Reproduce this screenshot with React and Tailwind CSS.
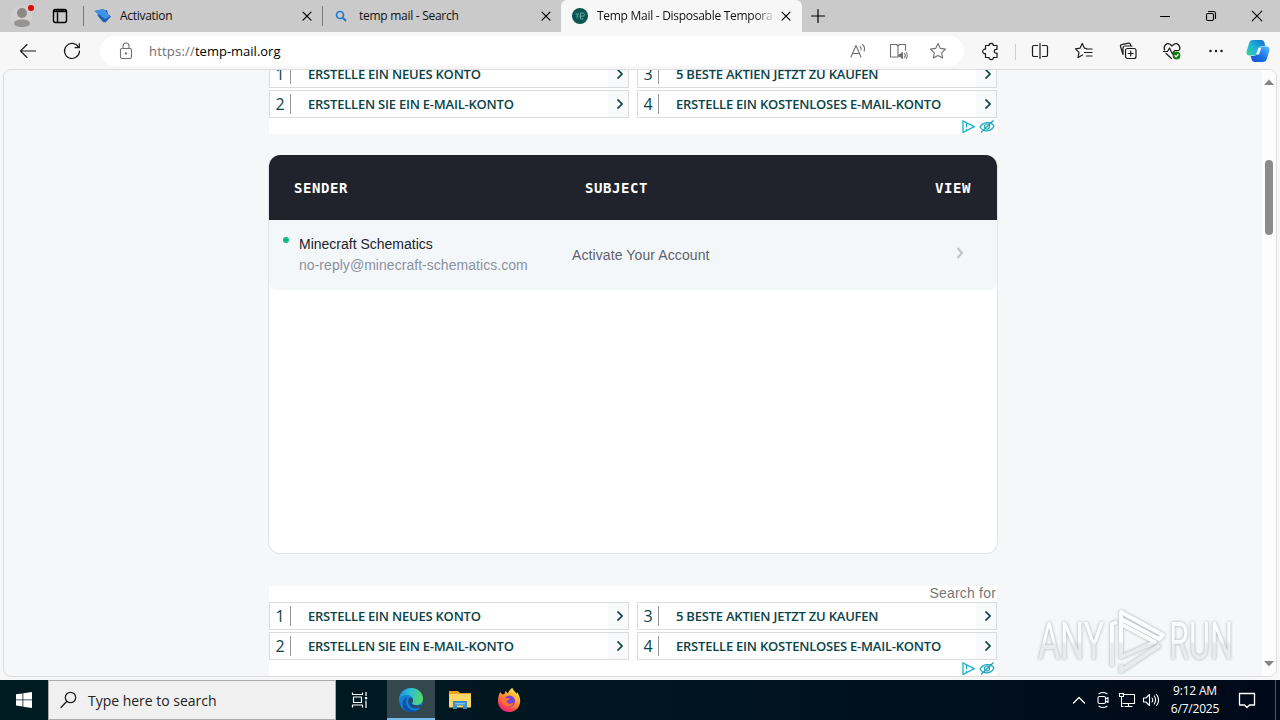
import React from "react";
import clsx from "clsx";

const ads = [
  [
    { id: 1, label: "ERSTELLE EIN NEUES KONTO" },
    { id: 2, label: "ERSTELLEN SIE EIN E-MAIL-KONTO" },
  ],
  [
    { id: 3, label: "5 BESTE AKTIEN JETZT ZU KAUFEN" },
    { id: 4, label: "ERSTELLE EIN KOSTENLOSES E-MAIL-KONTO" },
  ],
];

// Thin line icon on a 20px grid
const Icon = ({ children, className, size = 20, width = 1.1 }) => (
  <svg
    width={size}
    height={size}
    viewBox="0 0 20 20"
    fill="none"
    stroke="currentColor"
    strokeWidth={width}
    strokeLinecap="round"
    strokeLinejoin="round"
    className={clsx("shrink-0", className)}
  >
    {children}
  </svg>
);

const CloseIcon = () => (
  <Icon width={1.2}>
    <path d="M6 6.200l8 8M14 6.200l-8 8" />
  </Icon>
);

const Tab = ({ icon, title, titleClass, active }) => (
  <div
    className={clsx(
      "flex h-8 items-center",
      active
        ? "w-[241px] rounded-t-md bg-[#f7f7f7] pl-2.5 pr-1.5"
        : "w-[239px] pl-2.5 pr-1.5",
    )}
  >
    {icon}
    <div
      className={clsx(
        "ml-2 mr-1 h-5 flex-1 overflow-hidden whitespace-nowrap text-xs leading-5 text-[#111]",
        active &&
          "[mask-image:linear-gradient(to_right,black_90%,rgba(0,0,0,0.2)_100%)]",
      )}
    >
      <span className={titleClass}>{title}</span>
    </div>
    <CloseIcon />
  </div>
);

const TabStrip = () => (
  <div className="flex h-8 bg-[#cacaca] text-black">
    <div className="flex w-11 items-center justify-center">
      <svg width="28" height="28" viewBox="0 0 28 28">
        <circle cx="13.5" cy="15" r="11" fill="#d2d0ce" />
        <circle cx="14" cy="11" r="5" fill="#8b8886" />
        <path d="M6 21.500c0-3 3.500-4 8-4s8 1 8 4c0 2-3.500 3.500-8 3.500s-8-1.500-8-3.500z" fill="#979593" />
        <circle cx="23" cy="6" r="3" fill="#e3000f" />
      </svg>
    </div>
    <div className="flex w-8 items-center justify-center">
      <Icon width={1.4}>
        <rect x="3.500" y="3.500" width="13" height="13" rx="2" />
        <path d="M4 5.300h12" strokeWidth="2" />
        <path d="M7.500 7v9" />
      </Icon>
    </div>
    <div className="ml-[7px] mt-1.5 h-5 w-px bg-[#777]" />
    <Tab
      title="Activation"
      titleClass="tracking-[-0.28px]"
      icon={
        <svg width="18" height="18" viewBox="0 0 18 18" className="shrink-0">
          <path d="M.5 4l9-2 1.500 1.500 2-.5 1 4 3 2.500-5.500 6-2.500-.5L3.500 8.500 4 7z" fill="#1d5fb5" />
          <path d="M.5 4l9-2 5 5.500 1.500 2-5 2.500L4.500 7z" fill="#4194e3" />
        </svg>
      }
    />
    <div className="-ml-px mt-1.5 h-5 w-px bg-[#777]" />
    <Tab
      title="temp mail - Search"
      titleClass="tracking-[-0.28px]"
      icon={
        <svg width="18" height="18" viewBox="0 0 18 18" className="shrink-0">
          <circle cx="7" cy="8" r="3.500" fill="none" stroke="#2478c8" strokeWidth="1.700" />
          <path d="M9.800 10.800l3.200 3.200" stroke="#2478c8" strokeWidth="2" />
        </svg>
      }
    />
    <div className="-ml-px">
      <Tab
        active
        title="Temp Mail - Disposable Tempora"
        titleClass="tracking-[-0.28px]"
        icon={
          <svg width="18" height="18" viewBox="0 0 18 18" className="shrink-0">
            <circle cx="9" cy="9" r="8" fill="#0c5652" />
            <path
              d="M4.500 7H8M6.200 7v4.500M8 9.200h4.500M9.500 6v6M9.500 6h3l1 1.500-1 1.700M9.500 12h3"
              fill="none"
              stroke="#58aa9f"
              strokeWidth="1"
            />
          </svg>
        }
      />
    </div>
    <div className="flex w-8 items-center justify-center">
      <Icon width={1.200}>
        <path d="M10 3.500v13M3.500 10h13" />
      </Icon>
    </div>
    <div className="ml-auto flex">
      <div className="flex w-[46px] items-center justify-center">
        <Icon>
          <path d="M5.500 10.500h9" />
        </Icon>
      </div>
      <div className="flex w-[46px] items-center justify-center">
        <Icon>
          <rect x="5.500" y="7.500" width="7" height="7" rx="1.500" />
          <path d="M7.500 5.500h5a2 2 0 0 1 2 2v5" />
        </Icon>
      </div>
      <div className="flex w-[46px] items-center justify-center">
        <Icon>
          <path d="M5.200 5.200l9.600 9.600M14.800 5.200l-9.600 9.600" />
        </Icon>
      </div>
    </div>
  </div>
);

const ToolButton = ({ children }) => (
  <div className="flex w-11 items-center justify-center">{children}</div>
);

const starPath =
  "M10 2.500l2.300 4.900 5.200.7-3.800 3.700.9 5.300L10 14.600l-4.600 2.500.9-5.300L2.500 8.100l5.200-.7z";

const Toolbar = () => (
  <div className="flex h-[37px] bg-[#f7f7f7] pl-1.5 text-[#1b1b1b]">
    <ToolButton>
      <Icon>
        <path d="M17.500 10h-15M9 3.500L2.500 10l6.500 6.500" />
      </Icon>
    </ToolButton>
    <ToolButton>
      <Icon width={1.200}>
        <path d="M16.500 6.200A7.500 7.500 0 1 0 17.500 10M17.300 2.500v4.200h-4.200" />
      </Icon>
    </ToolButton>
    <div className="mt-1 ml-1.5 flex h-[30px] w-[864px] items-center rounded-full bg-white pl-4 pr-4 text-[#707070]">
      <Icon>
        <rect x="4.500" y="7.500" width="11" height="10" rx="1.500" />
        <path d="M7 7.500V5a3 3 0 0 1 6 0v2.500" />
        <circle cx="10" cy="12.500" r=".6" fill="currentColor" />
      </Icon>
      <div className="ml-[13px] flex-1 text-[13px] leading-5">
        <span className="tracking-[0.2px]">https://</span>
        <span className="text-black">temp-mail.org</span>
      </div>
      <div className="flex gap-5">
        <Icon>
          <path d="M3 16L8 4.500 13 16M5 12.500h6M12 5.500c1 .8 1.300 2 1 3.500M14.500 3.500c2 1.600 2.400 4 1.700 6.500" />
        </Icon>
        <Icon>
          <path d="M10 4v12H2.500V3.500H8.500L10 5l1.500-1.500H17.500V9" />
          <path d="M11 13.500h1.500l2-2v6l-2-2H11z" fill="currentColor" />
          <path d="M16.500 12.500c.9 1 .9 3 0 4M18.200 11.500c1.300 1.700 1.300 4.500 0 6" />
        </Icon>
        <Icon>
          <path d={starPath} />
        </Icon>
      </div>
    </div>
    <div className="ml-[5px] flex">
      <ToolButton>
        <Icon width={1.200}>
          <path d="M4.500 4.500h3.500a2.200 2.200 0 0 1 4.400 0h3.600v3.800h-.8a1.900 1.900 0 0 0 0 3.900h.8v4.300h-3.600a2.200 2.200 0 0 1-4.400 0H4.500v-4a2.200 2.200 0 1 1 0-4.200z" />
        </Icon>
      </ToolButton>
      <div className="mx-0.5 mt-3 h-4 w-px bg-[#cfcfcf]" />
      <ToolButton>
        <Icon width={1.200}>
          <path d="M10 2.500v15M7.500 4.500H4A1.500 1.500 0 0 0 2.500 6v8A1.500 1.500 0 0 0 4 15.500h3.500M12.500 4.500H16A1.500 1.500 0 0 1 17.500 6v8a1.500 1.500 0 0 1-1.500 1.500h-3.500" />
        </Icon>
      </ToolButton>
      <ToolButton>
        <Icon width={1.200}>
          <path d="M12.500 7.500l-2-.3L8.200 2.500 6 7.200l-4.500.6 3.500 3.500-1 5.200 4.500-2.500M12.500 8H18M10.500 11.500H18M12.500 15H18" />
        </Icon>
      </ToolButton>
      <ToolButton>
        <Icon width={1.200}>
          <rect x="7.500" y="7.500" width="10.500" height="10" rx="2" />
          <path d="M12.700 10v5M10.200 12.500h5M5 13.500l-2.500-8a1.500 1.500 0 0 1 1-1.900l7-1.400a1.800 1.800 0 0 1 2 1.300l.3 1.500M5 13.500V7a2 2 0 0 1 2-2h7" />
        </Icon>
      </ToolButton>
      <ToolButton>
        <Icon width={1.200}>
          <path d="M2.600 9C1 5 4.500 1.500 8 3.200L10 5l2-1.800c3.500-1.700 7 1.800 5.400 5.800M4 12.500l5.500 5M1.500 10.500h4l2-3.500 3 6 2-3.500h4" />
          <circle cx="14.500" cy="14.500" r="3.300" fill="#107c10" stroke="#107c10" />
          <path d="M13 14.700l1.200 1.100 1.900-2.300" stroke="white" />
        </Icon>
      </ToolButton>
      <ToolButton>
        <Icon>
          <g fill="currentColor">
            <circle cx="4.500" cy="10" r=".7" />
            <circle cx="10" cy="10" r=".7" />
            <circle cx="15.500" cy="10" r=".7" />
          </g>
        </Icon>
      </ToolButton>
      <div className="flex w-10 items-center justify-center">
        <svg width="24" height="24" viewBox="0 0 24 24">
          <defs>
            <linearGradient id="cpLeft" x1="0" y1="1" x2="1" y2="0">
              <stop offset="0" stopColor="#35d39b" />
              <stop offset=".45" stopColor="#20b5d8" />
              <stop offset="1" stopColor="#1469cf" />
            </linearGradient>
            <linearGradient id="cpRight" x1="0" y1="1" x2="1" y2="0">
              <stop offset="0" stopColor="#1c4fc4" />
              <stop offset=".5" stopColor="#1c74ea" />
              <stop offset="1" stopColor="#52c4fb" />
            </linearGradient>
          </defs>
          <path d="M7 1h8c2 0 3 1 3.500 3l.8 3h-3c-2 0-3 1-3.500 3l-1.300 4.500c-.5 1.500-1.300 2-2.500 2H4c-3 0-4-2-3.300-4.500L3.200 4C3.800 2 5 1 7 1z" fill="url(#cpLeft)" />
          <path d="M17 23H9c-2 0-3-1-3.500-3l-.8-3h3c2 0 3-1 3.500-3l1.300-4.500c.5-1.500 1.300-2 2.500-2H20c3 0 4 2 3.300 4.500L20.800 20c-.6 2-1.800 3-3.800 3z" fill="url(#cpRight)" />
          <path d="M12.500 8.500h3l-2.500 7h-3z" fill="#f4f9ff" />
        </svg>
      </div>
    </div>
  </div>
);

const AdRow = ({ ad }) => (
  <div className="flex h-7 items-center border border-[#dcdcdc] bg-white text-[#0b4347]">
    <span className="w-5 text-center text-base leading-none">{ad.id}</span>
    <span className="h-5 w-px bg-[#999]" />
    <span className="ml-[17px] flex-1 whitespace-nowrap text-[13px] font-semibold leading-none tracking-[-0.22px]">
      {ad.label}
    </span>
    <span className="flex h-[26px] w-5 items-center justify-center bg-[#f8f9fa]">
      <svg width="8" height="10" viewBox="0 0 8 10" className="ml-1" fill="none" stroke="currentColor" strokeWidth="1.700">
        <path d="M1.500 .5L6 5 1.500 9.500" />
      </svg>
    </span>
  </div>
);

const AdBlock = ({ heading, className }) => (
  <div className={clsx("w-[728px] shrink-0 bg-white font-['Open_Sans',sans-serif]", className)}>
    {heading && (
      <div className="h-4 pr-px text-right font-['Liberation_Sans',sans-serif] text-sm leading-[15px] tracking-[0.2px] text-[#777]">
        {heading}
      </div>
    )}
    <div className="grid grid-cols-2 gap-2">
      {ads.map((column) => (
        <div key={column[0].id} className="flex flex-col gap-0.5">
          {column.map((ad) => (
            <AdRow key={ad.id} ad={ad} />
          ))}
        </div>
      ))}
    </div>
    <div className="flex h-4 items-center justify-end gap-1 pr-0.5">
      <svg width="13" height="13" viewBox="0 0 13 13" fill="none" stroke="#16b1c9" strokeWidth="1.300">
        <path d="M1 1v11.500L12.300 6.700z" />
        <path d="M4.500 3v4.500M4.500 9v1.500" />
      </svg>
      <svg width="16" height="13" viewBox="0 0 16 13" fill="none" stroke="#16a5bd" strokeWidth="1.200">
        <path d="M1 7c3-5.500 11-6 14-1-2.500 6-11 6.500-14 1zM2 12.500L14.500.5" />
        <circle cx="8" cy="6.500" r="2.500" />
      </svg>
    </div>
  </div>
);

const Inbox = () => (
  <div className="-ml-px mt-[21px] h-[399px] w-[730px] shrink-0 overflow-hidden rounded-xl border border-t-0 border-[#e1e4e7] bg-white">
    <div className="flex h-[65px] items-center bg-[#20232b] pl-[25px] pr-[26px] font-['DejaVu_Sans_Mono',monospace] text-sm font-bold tracking-[0.57px] text-white">
      <span className="w-[291px]">SENDER</span>
      <span className="flex-1">SUBJECT</span>
      <span>VIEW</span>
    </div>
    <div className="flex h-[70px] rounded-b-lg bg-[#f4f7fa] pl-3.5 font-['Liberation_Sans',sans-serif] text-sm">
      <div className="mt-[17px] size-1.5 rounded-full bg-[#12b584]" />
      <div className="ml-2.5 w-[273px] pt-3.5 leading-[21px]">
        <div className="text-[#20232b]">Minecraft Schematics</div>
        <div className="tracking-[0.04px] text-[#8c919f]">no-reply@minecraft-schematics.com</div>
      </div>
      <div className="flex-1 self-center tracking-[0.1px] text-[#5d626c]">Activate Your Account</div>
      <svg width="8" height="12" viewBox="0 0 8 12" className="mr-[33px] mt-[27px]" fill="none" stroke="#bfc2c6" strokeWidth="2">
        <path d="M1.500 1L6 6l-4.500 5" />
      </svg>
    </div>
  </div>
);

const ScrollBar = () => (
  <div className="flex w-[14px] flex-col items-center bg-[#fcfcfc]">
    <svg width="10" height="6" viewBox="0 0 10 6" className="mt-[9px]">
      <path d="M0 6l5-5.500L10 6z" fill="#858585" />
    </svg>
    <div className="mt-[75px] h-[75px] w-2 rounded-full bg-[#8b8b8b]" />
    <svg width="10" height="6" viewBox="0 0 10 6" className="mb-[9px] mt-auto">
      <path d="M0 0l5 5.500L10 0z" fill="#858585" />
    </svg>
  </div>
);

const Watermark = () => (
  <svg
    width="204"
    height="70"
    viewBox="0 0 204 70"
    className="absolute left-[1034px] top-[606px] drop-shadow-[0_0_1.5px_rgba(90,95,100,0.5)]"
  >
    <defs>
      <linearGradient id="wm" x1="0" y1="0" x2="0" y2="70" gradientUnits="userSpaceOnUse">
        <stop offset=".5" stopColor="#fbfcfd" />
        <stop offset=".55" stopColor="#e9ebec" />
      </linearGradient>
    </defs>
    <g fill="url(#wm)" className="font-['Roboto',sans-serif] text-[51px] font-normal">
      <text x="4" y="53" textLength="66" lengthAdjust="spacingAndGlyphs">ANY</text>
      <text x="135" y="53" textLength="64" lengthAdjust="spacingAndGlyphs">RUN</text>
    </g>
    <g fill="none" stroke="url(#wm)" strokeWidth="4" strokeLinejoin="round">
      <path d="M78 60V18l5-2M87 38V6l42 23-4 4-38-20" />
      <path d="M87 21v30l34-15-34-18M87 59v6l39-26" />
    </g>
  </svg>
);

const PageView = () => (
  <div className="h-[611px] bg-[#f7f7f7] px-[3px]">
    <div className="flex h-[608px] overflow-hidden rounded-lg border border-[#dddddf] bg-[#f5f7f9]">
      <div className="flex flex-1 flex-col overflow-hidden pl-[265px]">
        <AdBlock className="-mt-[10px]" />
        <Inbox />
        <AdBlock heading="Search for" className="mt-8" />
      </div>
      <ScrollBar />
    </div>
  </div>
);

const TaskbarButton = ({ children, active }) => (
  <div
    className={clsx(
      "flex items-center justify-center",
      active ? "w-12 border-b-2 border-[#76b9ed] bg-[#34474f] pt-0.5" : "w-[49px]",
    )}
  >
    {children}
  </div>
);

const EdgeLogo = () => (
  <svg width="26" height="26" viewBox="0 0 26 26">
    <defs>
      <linearGradient id="edgeTop" x1="0" y1=".3" x2="1" y2=".4">
        <stop offset="0" stopColor="#1b91dc" />
        <stop offset=".5" stopColor="#2fc2d2" />
        <stop offset="1" stopColor="#58d85f" />
      </linearGradient>
    </defs>
    <circle cx="13" cy="13" r="12" fill="#1480d3" />
    <path d="M1 12C2 5 7 1 13 1c7 0 12 5 12 10.500 0 4-3 6.500-6.500 6.500-3 0-4.500-1-4.500-2 0-.8 1-1.200 1-3C15 10 12 8 9 8c-4 0-7 2-8 4z" fill="url(#edgeTop)" />
    <path d="M9.500 10c-3 4-1.500 10 3 12.500 3.500 2 8 1 10.500-2-3 5-10 6-15 3C3 20 3.500 12 9.500 10z" fill="#0e51a0" />
    <path d="M11 11c2-1.500 4 0 4 2 0 1.500-1 2-1 3 0 1.500 2 2.500 5 2.500 2 0 3.500-.5 4.500-1-1 3-4 4.500-7 4-5-.8-8-6-5.500-10.500z" fill="#0e51a0" />
    <path d="M12 12c1.500-1.500 3 0 3 1.500s-1 2-1 3c0 1.500 2 2.500 5 2.500 2 0 4-.7 5-1.500-.5 1.500-1.500 3-3 3.500-5 .5-9.500-3.500-9-9z" fill="#34474f" />
  </svg>
);

const ExplorerLogo = () => (
  <svg width="24" height="20" viewBox="0 0 24 20">
    <path d="M1 1h9l2 2h11v5H1z" fill="#e8a31a" />
    <path d="M1 4h22v13.500H1z" fill="#fcd667" />
    <path d="M5 11h14v8h-4v-3.500H9V19H5z" fill="#3c8ec9" />
    <path d="M7 13h10v1.500H7z" fill="#7bc4ee" />
  </svg>
);

const FirefoxLogo = () => (
  <svg width="26" height="26" viewBox="0 0 26 26">
    <defs>
      <linearGradient id="ff" x1=".8" y1="0" x2=".2" y2="1">
        <stop offset="0" stopColor="#fff04a" />
        <stop offset=".45" stopColor="#ff9332" />
        <stop offset=".8" stopColor="#f93b58" />
        <stop offset="1" stopColor="#e31587" />
      </linearGradient>
    </defs>
    <path d="M4 5l2.500 2.500 2-.5 1-3 2.500 2.500C13 3 15 1.500 16.500 1c1 3 3 4 4 5.500l1-1c3 5 3.500 9.500 1.500 13.500-2 4-6 6-10 6C7 25 2 20.500 2 14c0-3 .5-5.500 2-9z" fill="url(#ff)" />
    <circle cx="13.500" cy="14" r="5.500" fill="#7541df" />
    <path d="M5 11c3-2 6 .5 9 .5-1 2-3 1.500-3.500 3 1.500 3 5 2.500 7 1-1 5-8 5.500-11 1z" fill="#ff7133" />
  </svg>
);

const Taskbar = () => (
  <div className="flex h-10 bg-gradient-to-r from-[#001b22] via-[#001620] to-[#000918] text-white">
    <div className="flex w-12 items-center justify-center">
      <svg width="16" height="16" viewBox="0 0 16 16" fill="white">
        <path d="M0 2.300l6.500-.9v6.100H0zM7.300 1.300L16 0v7.500H7.300zM0 8.300h6.500v6.200L0 13.600zM7.300 8.300H16V16l-8.700-1.300z" />
      </svg>
    </div>
    <div className="flex w-[288px] items-center border border-[#aaa] bg-[#f0f0f0] pl-2.5 text-[#222]">
      <Icon width={1.300}>
        <circle cx="11.500" cy="7.500" r="5.200" />
        <path d="M7.700 11.500L2 17.500" />
      </Icon>
      <span className="ml-[9px] pt-0.5 text-sm tracking-[-0.02px]">Type here to search</span>
    </div>
    <TaskbarButton>
      <Icon width={1.200} className="-ml-0.5">
        <path d="M2.500 3v1.500h10V3M2.500 17v-2h10v2M3.500 7h8v5.500h-8zM16 2.500v3M16 11v6.500" strokeLinecap="square" />
        <path d="M15.500 7.500h1.200v1.200h-1.200z" fill="white" />
      </Icon>
    </TaskbarButton>
    <div className="ml-0.5 flex">
      <TaskbarButton active>
        <EdgeLogo />
      </TaskbarButton>
      <TaskbarButton>
        <ExplorerLogo />
      </TaskbarButton>
      <TaskbarButton>
        <FirefoxLogo />
      </TaskbarButton>
    </div>
    <div className="ml-auto flex items-center">
      <div className="flex gap-1">
        <Icon width={1.300}>
          <path d="M4.500 13l5.500-5.500 5.500 5.500" />
        </Icon>
        <Icon>
          <rect x="5" y="6.500" width="7.500" height="7" rx="1.500" />
          <path d="M12.500 9l2.500-1.500v5L12.500 11M6 3.800c2.500-1.600 5.500-1.600 8 0M6 16.200c2.500 1.600 5.500 1.600 8 0" />
        </Icon>
        <Icon>
          <path d="M6 4.500h11.500v9H6M11.500 13.500v3M8 16.500h7M2.500 3.500h4v3h-4zM4.500 6.500v10H6" />
        </Icon>
        <Icon>
          <path d="M2.500 8h2.500l3.500-3.500v11L5 12H2.500zM11 8c.8 1 .8 3 0 4M13.200 6c1.800 2.500 1.800 5.500 0 8M15.500 4.500c2.700 3.500 2.700 7.500 0 11" />
        </Icon>
      </div>
      <div className="ml-1 flex w-[60px] flex-col items-center text-xs leading-[18px]">
        <span className="tracking-[-0.2px]">9:12 AM</span>
        <span className="tracking-[-0.2px]">6/7/2025</span>
      </div>
      <Icon className="ml-3" width={1.300}>
        <path d="M2.500 3.500h15v11.500h-5L10 17.500 7.500 15h-5z" />
      </Icon>
      <div className="ml-[18px] h-10 w-px bg-[#4a5562]" />
      <div className="w-1" />
    </div>
  </div>
);

const App = () => (
  <div className="relative flex h-[720px] w-[1280px] flex-col overflow-hidden font-['Open_Sans','Noto_Sans',sans-serif]">
    <TabStrip />
    <Toolbar />
    <PageView />
    <Taskbar />
    <Watermark />
  </div>
);

export default App;
